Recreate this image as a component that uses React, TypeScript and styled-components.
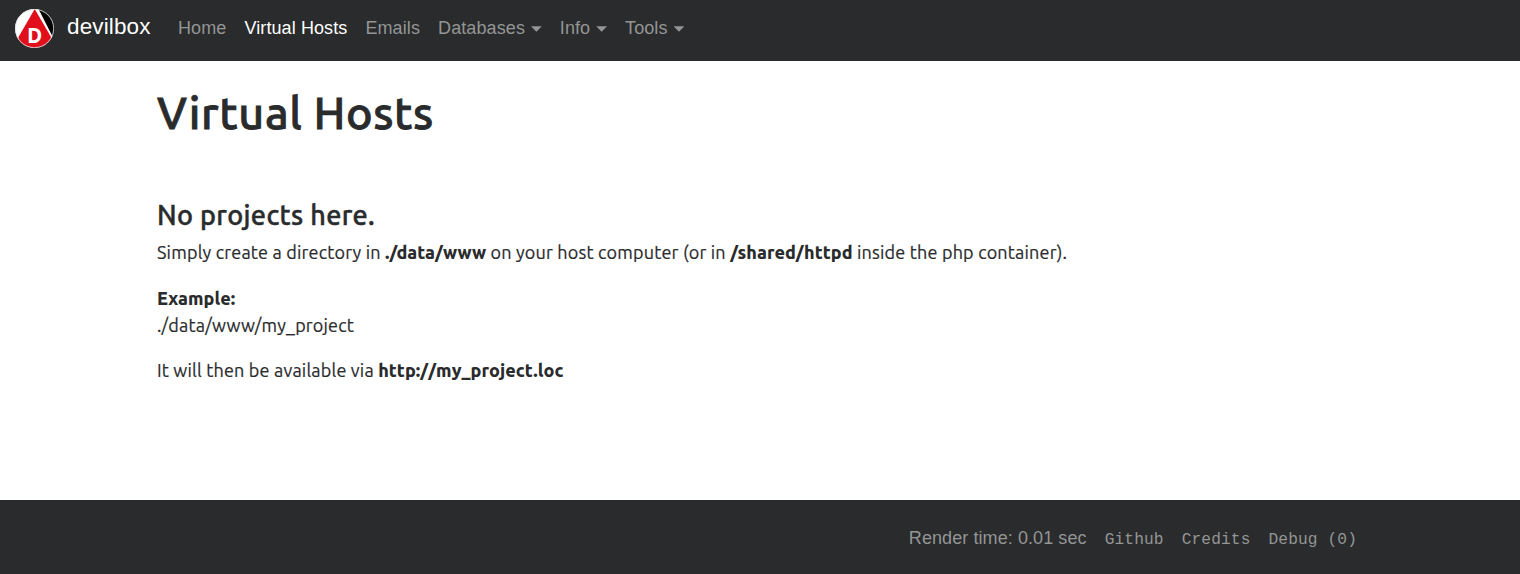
import React from "react";
import styled, { createGlobalStyle } from "styled-components";

const GlobalStyle = createGlobalStyle`
  * { box-sizing: border-box; }
  body {
    margin: 0;
    background: #fff;
    color: #292b2c;
    font: 18px/27px Ubuntu, "Noto Sans", sans-serif;
  }
`;

const Page = styled.div`
  display: flex;
  flex-direction: column;
  min-height: 574px;
`;

const Navbar = styled.nav`
  display: flex;
  align-items: flex-start;
  height: 61px;
  padding: 9px 15px;
  background: #292b2c;
  font-family: "Liberation Sans", Arial, sans-serif;
`;

const Brand = styled.a`
  display: flex;
  color: #fff;
  font-size: 22.5px;
  line-height: 36px;
  letter-spacing: 0.13px;
  margin-right: 18.4px;
`;

const Logo = styled.svg`
  width: 39px;
  height: 39px;
  margin-right: 13px;
`;

const LogoLetter = styled.text`
  font: 700 20.6px "Open Sans", sans-serif;
  letter-spacing: 0;
  fill: #fff;
`;

const Menu = styled.div`
  display: flex;
  padding-top: 6px;
`;

const MenuLink = styled.a<{ $active?: boolean }>`
  display: flex;
  align-items: center;
  padding: 0 9px;
  color: ${(p) => (p.$active ? "#fff" : "#949595")};
  letter-spacing: 0.1px;
  white-space: nowrap;
`;

const Caret = styled.span`
  width: 10.8px;
  height: 5.4px;
  margin: 1px 0 0 6px;
  background: currentColor;
  clip-path: polygon(0 0, 100% 0, 50% 100%);
`;

const Content = styled.main`
  flex: 1;
  padding: 27px 157px 0;
`;

const Title = styled.h1`
  margin: 0 0 63px;
  font-size: 45px;
  font-weight: 500;
  line-height: 49.5px;
  letter-spacing: 0.58px;
  -webkit-text-stroke: 0.8px currentColor;
`;

const Subtitle = styled.h4`
  margin: 0 0 9px;
  font-size: 27px;
  font-weight: 500;
  line-height: 29.7px;
  letter-spacing: 0.36px;
  -webkit-text-stroke: 0.45px currentColor;
`;

const Paragraph = styled.p`
  margin: 0 0 18px;
  font-weight: 400;
  letter-spacing: 0.19px;
  -webkit-text-stroke: 0.2px currentColor;
  white-space: nowrap;

  &:first-of-type {
    margin-bottom: 19px;
  }
`;

const Strong = styled.strong`
  font-weight: 800;
  letter-spacing: 0.05px;
  -webkit-text-stroke: 0;
`;

const Footer = styled.footer`
  display: flex;
  justify-content: flex-end;
  align-items: center;
  gap: 18px;
  height: 74px;
  padding: 3px 163px 0 0;
  background: #292b2c;
  color: #949595;
  letter-spacing: 0.08px;
  font-family: "Liberation Sans", Arial, sans-serif;
`;

const FooterLink = styled.a`
  font-family: "Liberation Mono", monospace;
  font-size: 16.2px;
  letter-spacing: 0.12px;
  padding-top: 3px;
`;

const menu = [
  { label: "Home" },
  { label: "Virtual Hosts", active: true },
  { label: "Emails" },
  { label: "Databases", dropdown: true },
  { label: "Info", dropdown: true },
  { label: "Tools", dropdown: true },
];

export default function App() {
  return (
    <Page>
      <GlobalStyle />
      <Navbar>
        <Brand>
          <Logo viewBox="0 0 39 39">
            <clipPath id="disc"><circle cx="19.5" cy="19.5" r="19.5" /></clipPath>
            <g clipPath="url(#disc)">
              <rect width="39" height="39" fill="#fff" />
              <path d="M23.5 0H39V29L37.8 28Z" fill="#000" />
              <path d="M19.7 0L36 28V39H3.5V28Z" fill="#e10f1c" />
            </g>
            <circle cx="19.5" cy="19.5" r="19.1" fill="none" stroke="#ddd" strokeWidth="0.8" />
            <LogoLetter x="11.9" y="34.3">D</LogoLetter>
          </Logo>
          devilbox
        </Brand>
        <Menu>
          {menu.map((item) => (
            <MenuLink key={item.label} $active={item.active}>
              {item.label}
              {item.dropdown && <Caret />}
            </MenuLink>
          ))}
        </Menu>
      </Navbar>
      <Content>
        <Title>Virtual Hosts</Title>
        <Subtitle>No projects here.</Subtitle>
        <Paragraph>
          Simply create a directory in <Strong>./data/www</Strong> on your host
          computer (or in <Strong>/shared/httpd</Strong> inside the php
          container).
        </Paragraph>
        <Paragraph>
          <Strong>Example:</Strong>
          <br />
          ./data/www/my_project
        </Paragraph>
        <Paragraph>
          It will then be available via <Strong>http://my_project.loc</Strong>
        </Paragraph>
      </Content>
      <Footer>
        <span>Render time: 0.01 sec</span>
        <FooterLink>Github</FooterLink>
        <FooterLink>Credits</FooterLink>
        <FooterLink>Debug (0)</FooterLink>
      </Footer>
    </Page>
  );
}
